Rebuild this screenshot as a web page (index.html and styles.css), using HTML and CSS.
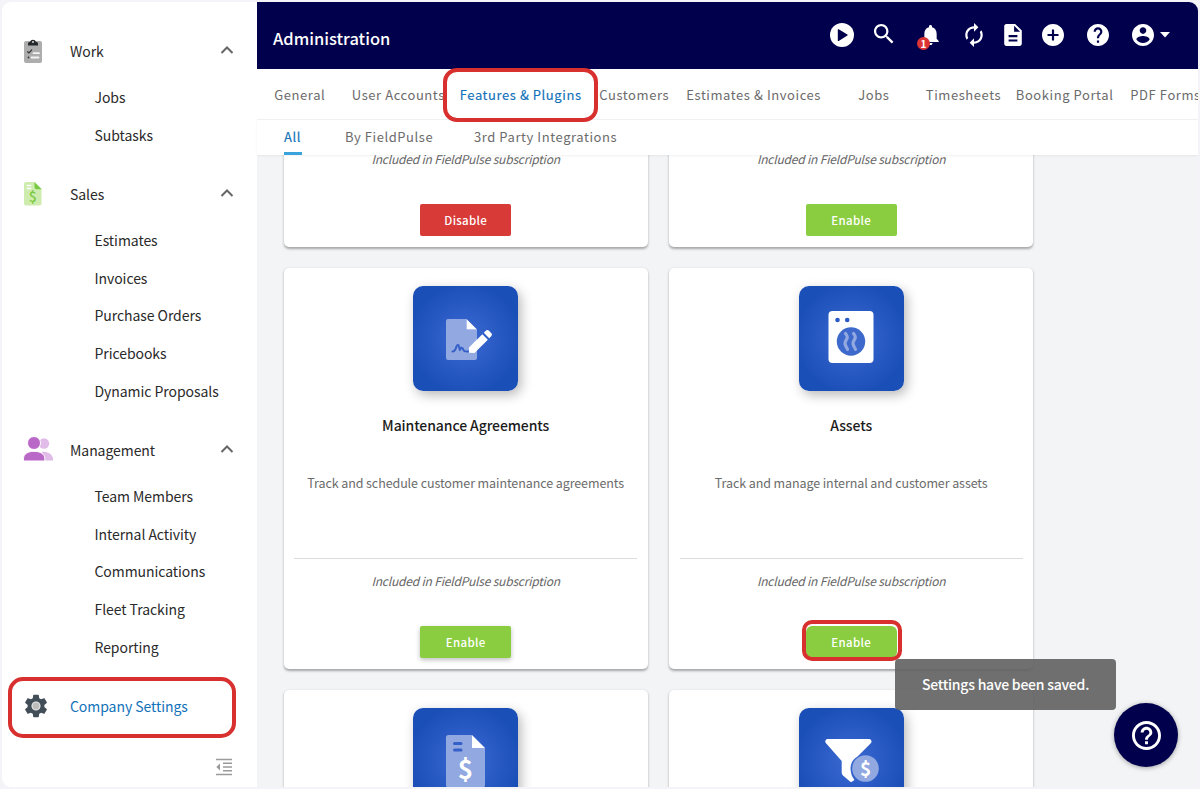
FILE: index.html
```html
<!DOCTYPE html>
<html lang="en">
<head>
<meta charset="utf-8">
<title>Administration</title>
<link rel="stylesheet" href="styles.css">
</head>
<body>
<div class="app">
  <aside class="sidebar">
    <section class="group">
      <div class="group-head">
        <svg class="group-icon" viewBox="0 0 32 32"><rect x="2" y="6" width="18" height="22" rx="2" fill="#adadad"/><path d="M6 10.500V8.500q0-1.500 1.500-1.500h.5a3.100 3.100 0 0 1 6 0h.5q1.500 0 1.500 1.500v2z" fill="#25282a"/><circle cx="11" cy="7" r="1.100" fill="#ccc"/><path d="M5.300 16.500l1.600 1.500 3.100-3.400" fill="none" stroke="#333" stroke-width="1.200"/><circle cx="6.500" cy="22.500" r=".9" fill="#333"/><path d="M11.500 18.200h5.500M9.500 22.500h7" stroke="#f4f4f4" stroke-width="1.800" stroke-linecap="round"/></svg>
        <span>Work</span>
        <svg class="chevron" viewBox="0 0 14 10"><path d="M1.500 8L7 2.500 12.500 8"/></svg>
      </div>
      <a class="item">Jobs</a>
      <a class="item">Subtasks</a>
    </section>
    <section class="group">
      <div class="group-head">
        <svg class="group-icon" viewBox="0 0 32 32"><path d="M4 4h8.500l7 7v14.500a2 2 0 0 1-2 2H4a2 2 0 0 1-2-2V6a2 2 0 0 1 2-2z" fill="#cdecae"/><path d="M12.500 4l7.200 7.300h-5.200a2 2 0 0 1-2-2z" fill="#7ac943"/><path d="M4.700 7.500h4.600M4.700 10.500h4.600" stroke="#fff" stroke-width="1.500"/><text x="10.700" y="24" class="dollar-green">$</text></svg>
        <span>Sales</span>
        <svg class="chevron" viewBox="0 0 14 10"><path d="M1.500 8L7 2.500 12.500 8"/></svg>
      </div>
      <a class="item">Estimates</a>
      <a class="item">Invoices</a>
      <a class="item">Purchase Orders</a>
      <a class="item">Pricebooks</a>
      <a class="item">Dynamic Proposals</a>
    </section>
    <section class="group">
      <div class="group-head">
        <svg class="group-icon" viewBox="0 0 32 32"><g fill="#e2bce8"><circle cx="22" cy="9.500" r="5.200"/><path d="M20 17.500c6 0 11 3 11 7.500v1.500H22z"/></g><g fill="#b968c7" stroke="#fff" stroke-width="1"><circle cx="12" cy="9" r="6.500"/><path d="M1.500 27v-2.500c0-4.500 4.500-7.200 10.500-7.200s10.800 2.700 10.800 7.200V27z"/></g></svg>
        <span>Management</span>
        <svg class="chevron" viewBox="0 0 14 10"><path d="M1.500 8L7 2.500 12.500 8"/></svg>
      </div>
      <a class="item">Team Members</a>
      <a class="item">Internal Activity</a>
      <a class="item">Communications</a>
      <a class="item">Fleet Tracking</a>
      <a class="item">Reporting</a>
    </section>
    <div class="group-head settings">
      <svg class="gear" viewBox="0 0 24 24"><circle cx="12" cy="12" r="4.500" fill="#bdbdbd"/><path fill="#414d57" d="M19.140 12.940c.04-.3.060-.61.060-.94 0-.32-.02-.64-.07-.94l2.030-1.580c.18-.14.23-.41.12-.61l-1.920-3.320c-.12-.22-.37-.29-.59-.22l-2.390.96c-.5-.38-1.030-.7-1.620-.94l-.36-2.540c-.04-.24-.24-.41-.48-.41h-3.840c-.24 0-.43.17-.47.41l-.36 2.540c-.59.24-1.130.57-1.620.94l-2.390-.96c-.22-.08-.47 0-.59.22L2.740 8.870c-.12.21-.08.47.12.61l2.030 1.580c-.05.3-.09.63-.09.94s.02.64.07.94l-2.030 1.580c-.18.14-.23.41-.12.61l1.920 3.320c.12.22.37.29.59.22l2.390-.96c.5.38 1.030.7 1.620.94l.36 2.540c.05.24.24.41.48.41h3.840c.24 0 .44-.17.47-.41l.36-2.540c.59-.24 1.130-.56 1.620-.94l2.390.96c.22.08.47 0 .59-.22l1.920-3.320c.12-.22.07-.47-.12-.61l-2.010-1.580zM12 15.600c-1.980 0-3.600-1.620-3.600-3.600s1.620-3.600 3.600-3.600 3.600 1.620 3.600 3.600-1.620 3.600-3.600 3.600z"/><circle cx="12" cy="12" r="3.400" fill="none" stroke="#e6e6e6" stroke-width="1"/></svg>
      <span>Company Settings</span>
    </div>
    <svg class="collapse" viewBox="0 0 18 18"><path d="M1 1.500h16M8 5.200h9M8 9h9M8 12.700h9M1 16.500h16" stroke="#9a9a9a" stroke-width="1.500"/><path d="M5 5.500v7L1.300 9z" fill="#9a9a9a"/></svg>
    <div class="highlight highlight-settings"></div>
  </aside>

  <main class="main">
    <header class="topbar">
      <h1>Administration</h1>
      <nav class="actions">
        <svg class="a-play" viewBox="0 0 24 24"><circle cx="12" cy="12" r="12" fill="#fff"/><path d="M7.800 6.800v10.600a.6.600 0 0 0 .9.500l8.700-5.300a.6.600 0 0 0 0-1L8.700 6.300a.6.600 0 0 0-.9.500z" fill="#01004c"/></svg>
        <svg class="a-search" viewBox="3 3 18 18"><path fill="#fff" d="M15.500 14h-.79l-.28-.27C15.410 12.590 16 11.110 16 9.500 16 5.910 13.090 3 9.500 3S3 5.910 3 9.500 5.910 16 9.500 16c1.610 0 3.090-.59 4.230-1.570l.27.28v.79l5 4.990L20.490 19l-4.990-5zm-6 0C7.010 14 5 11.990 5 9.500S7.010 5 9.500 5 14 7.010 14 9.500 11.990 14 9.500 14z"/></svg>
        <span class="a-bell"><svg viewBox="4 2.500 16 19.500"><path fill="#fff" d="M12 22c1.100 0 2-.9 2-2h-4c0 1.100.89 2 2 2zm6-6v-5c0-3.070-1.640-5.640-4.500-6.320V4c0-.83-.67-1.500-1.500-1.500s-1.500.67-1.500 1.500v.68C7.630 5.360 6 7.920 6 11v5l-2 2v1h16v-1l-2-2z"/></svg><b class="badge">1</b></span>
        <svg class="a-sync" viewBox="4 1 16 22"><path fill="#fff" d="M12 6v3l4-4-4-4v3c-4.420 0-8 3.580-8 8 0 1.570.46 3.030 1.240 4.260L6.700 14.800c-.45-.83-.7-1.790-.7-2.800 0-3.310 2.690-6 6-6zm6.760 1.740L17.300 9.200c.44.84.7 1.790.7 2.800 0 3.310-2.690 6-6 6v-3l-4 4 4 4v-3c4.420 0 8-3.580 8-8 0-1.570-.46-3.030-1.240-4.260z"/></svg>
        <svg class="a-doc" viewBox="4 2 16 20"><path fill="#fff" d="M14 2H6c-1.100 0-1.990.9-1.990 2L4 20c0 1.100.89 2 1.990 2H18c1.100 0 2-.9 2-2V8l-6-6zm2 16H8v-2h8v2zm0-4H8v-2h8v2zm-3-5V3.500L18.500 9H13z"/></svg>
        <svg class="a-plus" viewBox="2 2 20 20"><path fill="#fff" d="M12 2C6.480 2 2 6.480 2 12s4.480 10 10 10 10-4.480 10-10S17.520 2 12 2zm5 11h-4v4h-2v-4H7v-2h4V7h2v4h4v2z"/></svg>
        <svg class="a-help" viewBox="2 2 20 20"><path fill="#fff" d="M12 2C6.480 2 2 6.480 2 12s4.480 10 10 10 10-4.480 10-10S17.520 2 12 2zm1 17h-2v-2h2v2zm2.070-7.750l-.9.920C13.450 12.900 13 13.500 13 15h-2v-.5c0-1.100.45-2.100 1.170-2.830l1.240-1.260c.37-.36.590-.86.590-1.410 0-1.100-.9-2-2-2s-2 .9-2 2H8c0-2.210 1.790-4 4-4s4 1.790 4 4c0 .88-.36 1.680-.93 2.250z"/></svg>
        <svg class="a-user" viewBox="2 2 20 20"><path fill="#fff" d="M12 2C6.480 2 2 6.480 2 12s4.480 10 10 10 10-4.480 10-10S17.520 2 12 2zm0 3c1.660 0 3 1.340 3 3s-1.340 3-3 3-3-1.340-3-3 1.340-3 3-3zm0 14.200c-2.500 0-4.710-1.280-6-3.220.03-1.990 4-3.080 6-3.080 1.990 0 5.970 1.090 6 3.080-1.290 1.940-3.500 3.220-6 3.220z"/></svg>
        <svg class="a-caret" viewBox="0 0 10 6"><path fill="#fff" d="M0 0h10L5 5.500z"/></svg>
      </nav>
    </header>
    <nav class="tabs">
      <a class="t-general">General</a>
      <a class="t-users">User Accounts</a>
      <a class="t-features active">Features &amp; Plugins</a>
      <a class="t-customers">Customers</a>
      <a class="t-estimates">Estimates &amp; Invoices</a>
      <a class="t-jobs">Jobs</a>
      <a class="t-time">Timesheets</a>
      <a class="t-booking">Booking Portal</a>
      <a class="t-pdf">PDF Forms</a>
    </nav>
    <div class="highlight highlight-tab"></div>
    <nav class="subtabs">
      <a class="active">All</a>
      <a class="s-field">By FieldPulse</a>
      <a class="s-third">3rd Party Integrations</a>
    </nav>
    <div class="content">
      <div class="cards">
        <article class="card card-end">
          <p class="note">Included in FieldPulse subscription</p>
          <button class="btn btn-red">Disable</button>
        </article>
        <article class="card card-end">
          <p class="note">Included in FieldPulse subscription</p>
          <button class="btn">Enable</button>
        </article>
        <article class="card">
          <svg class="tile" viewBox="0 0 105 105"><path d="M35 33h18.500v10.500H64V72a2 2 0 0 1-2 2H35a2 2 0 0 1-2-2V35a2 2 0 0 1 2-2z" fill="#91a8e0"/><path d="M53.500 33L64 43.500H53.500z" fill="#fff"/><path d="M39.500 65.500c3 0 2.500-1.500 4-5 1-2.500 2-2.500 2.500 0l1 4c.5-3.500 2.500-3.500 3.500-.5.500 1.500 2.500 1.700 5 1.500" fill="none" stroke="#3560c8" stroke-width="2" stroke-linecap="round"/><path d="M56 66.800v-5.300L69.300 48.200l5.500 5.500L61.500 67z" fill="#fff"/><path d="M70.800 46.800l2-2a2.200 2.200 0 0 1 3.200 0l2.200 2.200a2.200 2.200 0 0 1 0 3.200l-2 2z" fill="#fff"/></svg>
          <h2>Maintenance Agreements</h2>
          <p class="desc">Track and schedule customer maintenance agreements</p>
          <p class="note">Included in FieldPulse subscription</p>
          <button class="btn btn-raised">Enable</button>
        </article>
        <article class="card">
          <svg class="tile" viewBox="0 0 105 105"><rect x="29.500" y="25" width="45" height="52" rx="4" fill="#fff"/><g fill="#2b5ac6"><circle cx="38.500" cy="34" r="2.300"/><circle cx="48.200" cy="34" r="2.300"/></g><circle cx="52" cy="55.500" r="14.200" fill="#3d68cc"/><g fill="none" stroke="#91a8e0" stroke-width="3.200" stroke-linecap="round"><path d="M46.500 47.500c1 1.500 2.500 3 1.500 5l-1.800 3.500c-1 2.500 1 4.500 2.300 7.300"/><path d="M54.500 47.500c1 1.500 2.500 3 1.500 5l-1.800 3.500c-1 2.500 1 4.500 2.300 7.300"/></g></svg>
          <h2>Assets</h2>
          <p class="desc">Track and manage internal and customer assets</p>
          <p class="note">Included in FieldPulse subscription</p>
          <button class="btn btn-marked">Enable<span class="highlight highlight-button"></span></button>
        </article>
        <article class="card">
          <svg class="tile" viewBox="0 0 105 105"><path d="M35.500 27H59v13h13v37a2.500 2.500 0 0 1-2.500 2.500h-34A2.500 2.500 0 0 1 33 77V29.500a2.500 2.500 0 0 1 2.500-2.500z" fill="#91a8e0"/><path d="M59 27l13 13H59z" fill="#fff"/><path d="M41.500 35.500h6.500M41.500 42h6.500" stroke="#3560c8" stroke-width="3" stroke-linecap="round"/><text x="52.500" y="70.500" class="dollar-large">$</text></svg>
        </article>
        <article class="card">
          <svg class="tile" viewBox="0 0 105 105"><path d="M29 31h41a2.500 2.500 0 0 1 2 4L58.500 48.500Q52 52 51.500 60q0 7 4 12l-3 2q-.5.200-1.500-.5l-7-6q-1.300-1-1.300-3V53L26.800 35a2.500 2.500 0 0 1 2.200-4z" fill="#fff"/><circle cx="66.500" cy="60.500" r="13.300" fill="#91a8e0"/><text x="66.500" y="67.500" class="dollar-small">$</text></svg>
        </article>
      </div>
    </div>
  </main>
  <div class="toast">Settings have been saved.</div>
  <div class="help-fab"><svg viewBox="2 2 20 20"><path fill="#fff" d="M11 18h2v-2h-2v2zm1-16C6.480 2 2 6.480 2 12s4.480 10 10 10 10-4.480 10-10S17.520 2 12 2zm0 18c-4.410 0-8-3.590-8-8s3.590-8 8-8 8 3.590 8 8-3.590 8-8 8zm0-14c-2.210 0-4 1.790-4 4h2c0-1.100.9-2 2-2s2 .9 2 2c0 2-3 1.750-3 5h2c0-2.250 3-2.500 3-5 0-2.210-1.790-4-4-4z"/></svg></div>
</div>
</body>
</html>
```
FILE: styles.css
```css
* { box-sizing: border-box; }
body {
  margin: 0;
  height: 789px;
  padding: 2px;
  overflow: hidden;
  background: #f4f4f8;
  font-family: "Noto Sans CJK SC", "Noto Sans", sans-serif;
  color: #2a2a2a;
}
h1, h2, p { margin: 0; font-weight: 400; }
.app {
  display: flex;
  width: 1196px;
  height: 785px;
  border-radius: 9px;
  overflow: hidden;
  background: #f2f4f6;
}

/* Sidebar */
.sidebar {
  position: relative;
  width: 255px;
  flex: none;
  padding-top: 21.200px;
  background: #fff;
  font-size: 14px;
  letter-spacing: -.06px;
}
.group { margin-bottom: 11.900px; }
.group-head {
  display: flex;
  align-items: center;
  height: 56px;
  padding-left: 20px;
}
.group-head span { flex: 1; }
.group-icon { width: 32px; height: 32px; margin-right: 16px; }
.chevron { width: 14px; height: 10px; margin: -3px 23px 0 0; }
.chevron path { fill: none; stroke: #666; stroke-width: 2; }
.item { display: block; height: 37.600px; line-height: 37.600px; padding-left: 92.500px; }
.settings { color: #1272b9; }
.gear { width: 28px; height: 28px; margin: 0 20.500px 0 -.5px; }
.collapse { display: block; width: 18px; height: 18px; margin: 24px 0 0 213px; }
.dollar-green { font-size: 14px; font-weight: 500; fill: #7ac943; text-anchor: middle; }

/* Callout outlines */
.highlight { position: absolute; border: 4px solid #d8302f; pointer-events: none; }
.highlight-settings { left: 6px; top: 675px; width: 228px; height: 61px; border-radius: 15px; }
.highlight-tab { left: 186px; top: 66px; width: 155px; height: 54px; border-radius: 14px; z-index: 2; }
.highlight-button { left: -4px; top: -6px; width: 100px; height: 41px; border-radius: 10px; }

/* Top bar */
.main { position: relative; flex: 1; min-width: 0; display: flex; flex-direction: column; }
.topbar {
  display: flex;
  align-items: center;
  justify-content: space-between;
  height: 67px;
  flex: none;
  padding: 0 28px 0 16px;
  background: #01004c;
  color: #fff;
}
.topbar h1 { font-size: 16.500px; font-weight: 500; padding-top: 5px; line-height: 24px; }
.actions { display: flex; align-items: center; margin-top: -1px; }
.actions svg { display: block; }
.a-play { width: 24px; height: 24px; margin-right: 20px; }
.a-search { width: 20px; height: 20px; margin: -2px 28px 0 0; }
.a-bell { position: relative; margin-right: 25.500px; }
.a-bell svg { width: 17px; height: 20px; }
.a-sync { width: 18px; height: 24px; margin: -1px 21px 0 0; }
.a-doc { width: 18px; height: 22px; margin: -1px 20px 0 0; }
.a-plus { width: 22px; height: 22px; margin: -1px 23px 0 0; }
.a-help { width: 22px; height: 22px; margin: -1px 23.500px 0 0; }
.a-user { width: 22px; height: 22px; margin: -1px 6px 0 0; }
.a-caret { width: 10px; height: 6px; }
.badge {
  position: absolute;
  left: -5px;
  top: 12px;
  width: 13px;
  height: 13px;
  border-radius: 50%;
  background: #dc3434;
  font-size: 10px;
  line-height: 13px;
  text-align: center;
}

/* Tabs */
.tabs, .subtabs {
  display: flex;
  flex: none;
  background: #fff;
  color: #6b6b6b;
  font-size: 13px;
  letter-spacing: .57px;
  white-space: nowrap;
}
.tabs { height: 51px; line-height: 51px; padding-left: 17.300px; border-bottom: 1px solid #f1f1f3; overflow: hidden; }
.tabs a, .subtabs a { flex: none; }
.t-general { width: 77.500px; }
.t-users { width: 108px; }
.t-features { width: 139.500px; }
.t-customers { width: 87px; }
.t-estimates { width: 172px; }
.t-jobs { width: 67.500px; }
.t-time { width: 90px; }
.t-booking { width: 114.500px; }
.tabs .active, .subtabs .active { color: #1272b9; -webkit-text-stroke: .15px #1272b9; }
.subtabs { height: 35px; line-height: 33px; padding-left: 27px; position: relative; box-shadow: 0 1px 2px rgba(0,0,0,.06); z-index: 1; }
.subtabs .active { width: 18px; border-bottom: 3px solid #3ba3dc; }
.s-field { margin-left: 43px; width: 129px; }

/* Plugin cards */
.content { flex: 1; min-height: 0; overflow: hidden; padding-left: 26.700px; }
.cards {
  display: grid;
  grid-template-columns: 364px 364px;
  grid-auto-rows: 401px;
  gap: 21px 21.500px;
  margin-top: -309px;
}
.card {
  display: flex;
  flex-direction: column;
  align-items: center;
  padding: 18px 10.500px 11px;
  border-radius: 5px;
  background: #fff;
  box-shadow: 0 1.500px 2.500px rgba(0,0,0,.32);
  text-align: center;
}
.card-end { justify-content: flex-end; }
.tile {
  width: 105px;
  height: 105px;
  flex: none;
  border-radius: 10px;
  background: radial-gradient(circle, #3c69d2 0%, #1b4fb8 75%);
  box-shadow: 3px 4px 12px rgba(0,0,0,.28);
}
.card h2 { margin-top: 22px; font-size: 14px; letter-spacing: -.1px; line-height: 24px; font-weight: 500; color: #1c1c1c; }
.desc { width: 100%; height: 88px; margin-top: 34px; font-size: 12.500px; letter-spacing: -.09px; line-height: 24px; color: #6b6b6b; border-bottom: 1px solid #ddd; }
.note { margin-top: 10px; font-size: 12px; letter-spacing: -.2px; line-height: 24px; font-style: italic; color: #666; }
.btn {
  position: relative;
  flex: none;
  width: 91px;
  height: 32px;
  margin-top: 33px;
  padding: 0;
  border: 0;
  border-radius: 2px;
  background: #8acd40;
  color: #fff;
  font: 500 11.500px/31px "Noto Sans CJK SC", sans-serif;
  letter-spacing: .3px;
}
.btn-red { background: #d83a38; }
.btn-raised { box-shadow: 0 2px 5px rgba(0,0,0,.25); }
.btn-marked { border-radius: 6px; }
.dollar-large { font-size: 26px; font-weight: 700; fill: #fff; text-anchor: middle; }
.dollar-small { font-size: 19px; font-weight: 700; fill: #fff; text-anchor: middle; }

/* Overlays */
.toast {
  position: absolute;
  left: 895px;
  top: 659px;
  width: 221px;
  height: 51px;
  border-radius: 4px;
  background: rgba(97,97,97,.9);
  color: #fff;
  font-size: 14px;
  letter-spacing: -.23px;
  font-weight: 500;
  line-height: 50px;
  text-align: center;
}
.help-fab {
  position: absolute;
  left: 1114px;
  top: 703px;
  width: 64px;
  height: 64px;
  display: grid;
  place-items: center;
  border-radius: 50%;
  background: #01004c;
  box-shadow: 0 1px 5px rgba(0,0,0,.35);
}
.help-fab svg { width: 29px; height: 29px; }
```
